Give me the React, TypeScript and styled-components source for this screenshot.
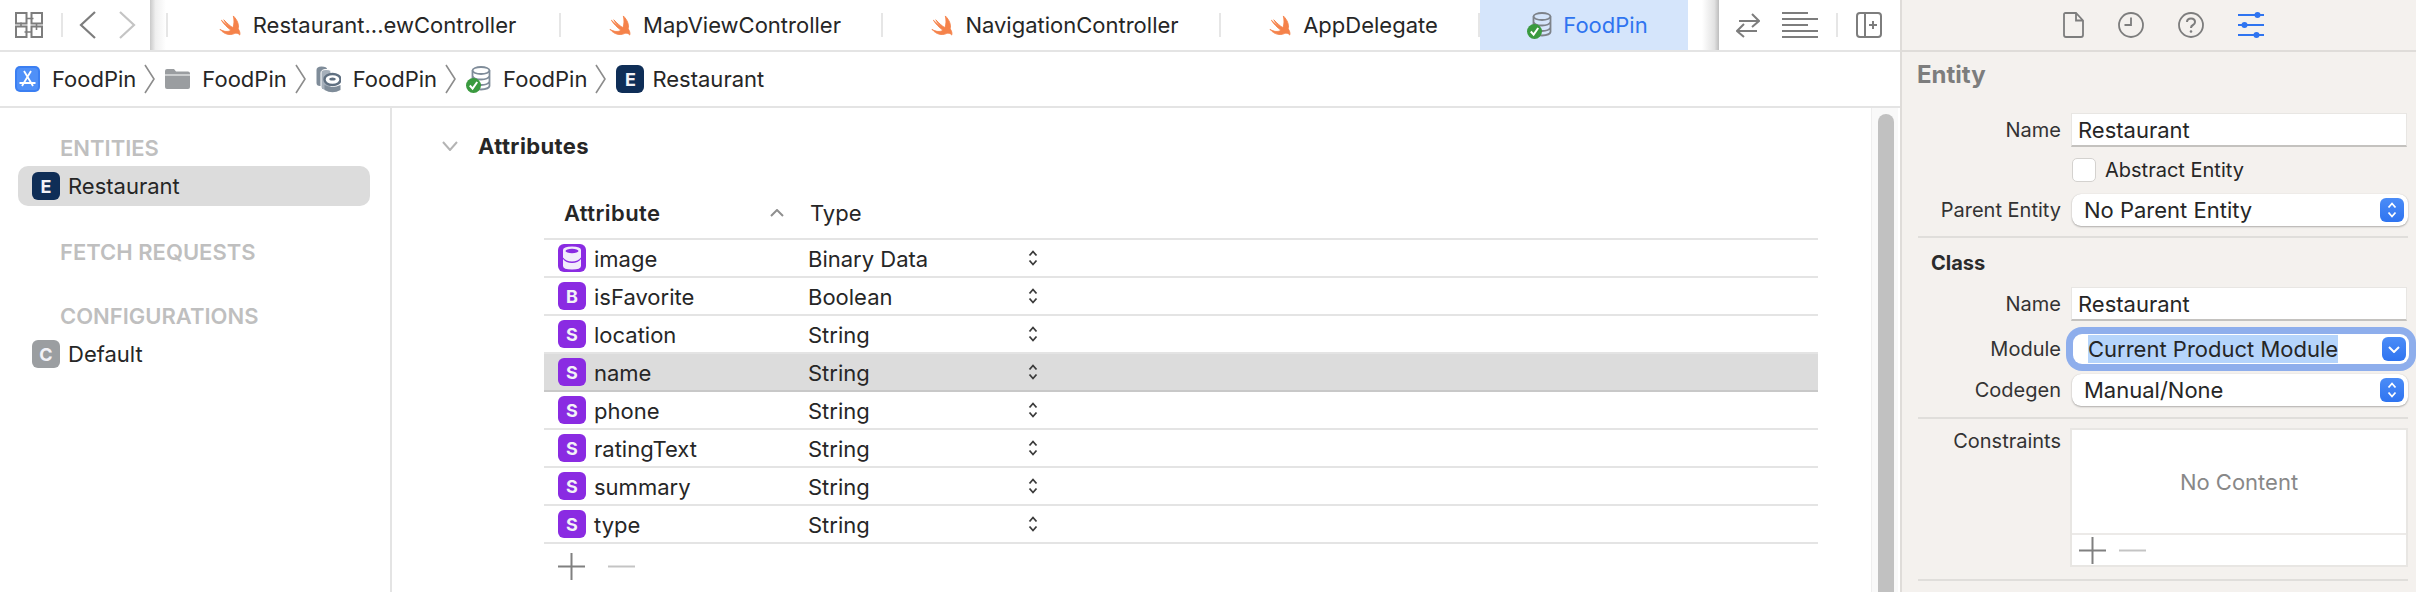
import React from "react";
import styled, { createGlobalStyle } from "styled-components";

const GlobalStyle = createGlobalStyle`
  html, body {
    margin: 0;
    padding: 0;
    background: #fff;
  }
  body {
    font-family: Inter, "Liberation Sans", sans-serif;
    font-size: 22px;
    color: #262626;
    overflow: hidden;
  }
`;

const Page = styled.div`
  display: flex;
  width: 2416px;
  height: 592px;
  overflow: hidden;
`;

const MainColumn = styled.div`
  display: flex;
  flex-direction: column;
  width: 1900px;
  flex-shrink: 0;
`;

const Toolbar = styled.div`
  display: flex;
  height: 52px;
  box-sizing: border-box;
  border-bottom: 2px solid #e4e4e4;
`;

const NavGroup = styled.div`
  display: flex;
  align-items: center;
  gap: 23px;
  width: 150px;
  padding-left: 15px;
  box-sizing: border-box;
  flex-shrink: 0;
`;

const NavRule = styled.div`
  width: 2px;
  height: 24px;
  background: #e6e6e6;
  margin: 0 -7px 0 -5px;
`;

const Shadow = styled.div<{ $w: number }>`
  width: ${(p) => p.$w}px;
  height: 50px;
  flex-shrink: 0;
`;

const LeftShadow = styled(Shadow)`
  background: linear-gradient(90deg, #c9c9c9 0, #efefef 35%, #fff 100%);
`;

const RightShadow = styled(Shadow)`
  background: linear-gradient(90deg, #fff 0, #fff 45%, #e2e2e2 85%, #bdbdbd 100%);
`;

const TabRule = styled.div`
  width: 2px;
  height: 24px;
  background: #e6e6e6;
  align-self: center;
  flex-shrink: 0;
`;

const Tab = styled.div<{ $w: number; $active?: boolean }>`
  display: flex;
  align-items: center;
  justify-content: center;
  gap: 11px;
  width: ${(p) => p.$w}px;
  height: 50px;
  flex-shrink: 0;
  padding-left: 7px;
  box-sizing: border-box;
  background: ${(p) => (p.$active ? "#d5e5fb" : "transparent")};
  color: ${(p) => (p.$active ? "#2f74f0" : "#262626")};
`;

const ToolGroup = styled.div`
  display: flex;
  align-items: center;
  flex: 1;
  padding-left: 17px;
  gap: 22px;
`;

const ToolRule = styled.div`
  width: 2px;
  height: 24px;
  background: #e6e6e6;
  margin: 0 -4px 0 -4px;
`;

const Breadcrumb = styled.div`
  display: flex;
  align-items: center;
  height: 56px;
  box-sizing: border-box;
  padding-left: 15px;
  border-bottom: 2px solid #e4e4e4;
`;

const Crumb = styled.div<{ $gap: number }>`
  display: flex;
  align-items: center;
  gap: ${(p) => p.$gap}px;
`;

const CrumbArrow = styled.svg`
  width: 11px;
  height: 30px;
  margin: 0 10px 0 8px;
  flex-shrink: 0;
`;

const Body = styled.div`
  display: flex;
  flex: 1;
  min-height: 0;
`;

const Sidebar = styled.div`
  width: 392px;
  flex-shrink: 0;
  box-sizing: border-box;
  border-right: 2px solid #e4e4e4;
  padding: 28px 20px 0 18px;
`;

const SectionLabel = styled.div<{ $top: number }>`
  height: 24px;
  line-height: 24px;
  margin-top: ${(p) => p.$top}px;
  padding-left: 42px;
  font-weight: 600;
  color: #bfbfbf;
`;

const SidebarRow = styled.div<{ $selected?: boolean }>`
  display: flex;
  align-items: center;
  gap: 8px;
  height: 40px;
  margin-top: 6px;
  padding-left: 14px;
  border-radius: 10px;
  background: ${(p) => (p.$selected ? "#dcdcdc" : "transparent")};
`;

const Badge = styled.div<{ $bg: string }>`
  display: flex;
  align-items: center;
  justify-content: center;
  width: 28px;
  height: 28px;
  flex-shrink: 0;
  border-radius: 6px;
  background: ${(p) => p.$bg};
  color: #f2f2f7;
  font-size: 18px;
  font-weight: 700;
`;

const Editor = styled.div`
  flex: 1;
  box-sizing: border-box;
  padding: 23px 0 0 50px;
  min-width: 0;
`;

const SectionHeader = styled.div`
  display: flex;
  align-items: center;
  gap: 20px;
  height: 30px;
  font-size: 22px;
  letter-spacing: 0.4px;
  font-weight: 700;
`;

const AttributeTable = styled.div`
  margin: 27px 0 0 102px;
  width: 1274px;
`;

const HeaderRow = styled.div`
  display: flex;
  align-items: center;
  height: 52px;
  box-sizing: border-box;
  padding-left: 20px;
  border-bottom: 2px solid #e4e4e4;
`;

const AttributeHeader = styled.div`
  width: 206px;
  letter-spacing: 0.4px;
  font-weight: 600;
`;

const SortCell = styled.div`
  width: 40px;
  display: flex;
`;

const TableRow = styled.div<{ $selected?: boolean }>`
  display: flex;
  align-items: center;
  height: 38px;
  box-sizing: border-box;
  padding-left: 14px;
  border-bottom: 2px solid ${(p) => (p.$selected ? "#c8c8c8" : "#e4e4e4")};
  background: ${(p) => (p.$selected ? "#dcdcdc" : "transparent")};
`;

const NameCell = styled.div`
  width: 214px;
  margin-left: 8px;
  padding-top: 1px;
`;

const TypeCell = styled.div`
  width: 220px;
  padding-top: 2px;
`;

const AddRow = styled.div`
  display: flex;
  align-items: center;
  gap: 23px;
  height: 27px;
  margin-top: 9px;
  padding-left: 14px;
`;

const ScrollTrack = styled.div`
  width: 27px;
  margin-right: 2px;
  flex-shrink: 0;
  box-sizing: border-box;
  background: #f9f9f9;
  border-left: 1px solid #eeeeee;
  padding: 6px 4px 0 6px;
`;

const ScrollThumb = styled.div`
  height: 100%;
  border-radius: 8px 8px 0 0;
  background: #c1c1c1;
`;

const Inspector = styled.div`
  flex: 1;
  box-sizing: border-box;
  border-left: 2px solid #dfdcd9;
  background: #f4f1ee;
  font-size: 20px;
`;

const InspectorTabs = styled.div`
  display: flex;
  align-items: center;
  height: 52px;
  box-sizing: border-box;
  border-bottom: 2px solid #dfdcd9;
  padding-left: 161px;
  gap: 34px;
`;

const InspectorTitle = styled.div`
  height: 46px;
  line-height: 46px;
  padding-left: 15px;
  font-size: 24px;
  font-weight: 700;
  color: #7d7d7d;
`;

const FormRow = styled.div<{ $top: number }>`
  display: flex;
  align-items: center;
  margin-top: ${(p) => p.$top}px;
`;

const ConstraintRow = styled(FormRow)`
  align-items: flex-start;
`;

const FieldLabel = styled.div`
  width: 159px;
  flex-shrink: 0;
  text-align: right;
  color: #333;
`;

const ConstraintLabel = styled(FieldLabel)`
  margin-top: 1px;
`;

const TextField = styled.div`
  width: 336px;
  height: 34px;
  margin-left: 10px;
  padding-left: 6px;
  box-sizing: border-box;
  display: flex;
  align-items: center;
  background: #fff;
  border: 1px solid #e8e6e3;
  border-bottom: 2px solid #c4c2bf;
  color: #262626;
  font-size: 22px;
`;

const CheckRow = styled.div`
  display: flex;
  align-items: center;
  gap: 9px;
  margin: 11px 0 0 170px;
`;

const CheckBox = styled.div`
  width: 24px;
  height: 24px;
  box-sizing: border-box;
  background: #fff;
  border: 1px solid #d4d2cf;
  border-radius: 5px;
`;

const Select = styled.div<{ $focused?: boolean }>`
  display: flex;
  align-items: center;
  justify-content: space-between;
  width: 336px;
  height: ${(p) => (p.$focused ? 30 : 32)}px;
  margin-left: ${(p) => (p.$focused ? 12 : 11)}px;
  padding: ${(p) => (p.$focused ? "0 3px 0 15px" : "0 4px 0 12px")};
  box-sizing: border-box;
  border-radius: 9px;
  background: #fff;
  font-size: 22px;
  box-shadow: ${(p) =>
    p.$focused
      ? "0 0 0 7px #8eaeec"
      : "0 1px 2px rgba(0,0,0,.28), 0 0 1px rgba(0,0,0,.15)"};
`;

const Highlight = styled.span`
  background: #b5d4fb;
  line-height: 28px;
`;

const SelectButton = styled.div`
  display: flex;
  align-items: center;
  justify-content: center;
  width: 24px;
  height: 24px;
  border-radius: 6px;
  background: linear-gradient(#4b8cf7, #2f74f0);
`;

const GroupTitle = styled.div`
  height: 24px;
  line-height: 24px;
  margin-top: 13px;
  padding-left: 29px;
  font-weight: 700;
  color: #2b2b2b;
`;

const Separator = styled.div<{ $top: number }>`
  height: 2px;
  margin: ${(p) => p.$top}px 8px 0 16px;
  background: #e0dedb;
`;

const ConstraintBox = styled.div`
  width: 338px;
  height: 139px;
  margin-left: 9px;
  box-sizing: border-box;
  border: 2px solid #e8e6e3;
  background: #fff;
  display: flex;
  flex-direction: column;
`;

const EmptyText = styled.div`
  display: flex;
  align-items: center;
  justify-content: center;
  height: 105px;
  flex-shrink: 0;
  box-sizing: border-box;
  padding-top: 1px;
  border-bottom: 2px solid #eceae8;
  color: #888;
  font-size: 22px;
`;

const BoxTools = styled.div`
  display: flex;
  align-items: center;
  gap: 13px;
  flex: 1;
  padding-left: 7px;
`;

/* drawings */

const SwiftIcon = () => (
  <svg width="24" height="21" viewBox="0 0 24 22">
    <path
      d="M15.5 1 C20 5.5 21.6 10.5 20.6 14.5 C22 16.5 22.8 18.6 22.2 21 C20.6 18.8 18.5 18.6 16.5 19.5 C12 21.5 6 20.5 1.5 15 C5.5 17.6 10 18 13 16 C9 13 5.5 9.5 3 5.5 C6 8.4 9 10.8 11.5 12.6 C9 10.2 7 7.8 5.5 5 C9 8.8 12 11.4 15 13.3 C16.5 10 16.5 5 15.5 1 Z"
      fill="#f5824a"
      stroke="#f5824a"
      strokeWidth="0.9"
      strokeLinejoin="round"
    />
  </svg>
);

const GridIcon = () => (
  <svg width="28" height="26" viewBox="0 0 28 26" fill="none" stroke="#7d7d7d" strokeWidth="2">
    <rect x="1" y="1" width="10.5" height="10.5" />
    <rect x="16.5" y="1" width="10.5" height="10.5" />
    <rect x="1" y="14.5" width="10.5" height="10.5" />
    <rect x="16.5" y="14.5" width="10.5" height="10.5" />
    <path d="M11.5 6.5h7M21.5 11v7M16.5 20h-7M6 14.5v-4" strokeWidth="1.6" />
  </svg>
);

const NavChevron = ({ back, color }: { back?: boolean; color: string }) => (
  <svg width="17" height="28" viewBox="0 0 17 28" fill="none" stroke={color} strokeWidth="2.2">
    <path d={back ? "M16 1 L2 14 L16 27" : "M1 1 L15 14 L1 27"} />
  </svg>
);

const SwapIcon = () => (
  <svg width="24" height="26" viewBox="0 0 24 26" fill="none" stroke="#7d7d7d" strokeWidth="2">
    <path d="M3 9 H23 M16 2 L23 9 L16 15" />
    <path d="M1 19 H21 M8 12 L1 19 L8 25" />
  </svg>
);

const LinesIcon = () => (
  <svg width="36" height="26" viewBox="0 0 36 26" fill="none" stroke="#7d7d7d" strokeWidth="2">
    <path d="M0 1 H26 M0 7 H36 M0 13 H26 M0 19 H36 M0 25 H36" />
  </svg>
);

const AddEditorIcon = () => (
  <svg width="26" height="26" viewBox="0 0 26 26" fill="none" stroke="#7d7d7d" strokeWidth="2">
    <rect x="1" y="1" width="24" height="24" rx="3" />
    <path d="M9 1 V25 M13 13 H21 M17 9 V17" />
  </svg>
);

const AppIcon = () => (
  <svg width="25" height="26" viewBox="0 0 25 26">
    <rect x="0" y="0" width="25" height="26" rx="5" fill="#3b7ff2" />
    <rect x="2" y="2" width="21" height="22" rx="3.5" fill="#4f90f8" />
    <path d="M9 5 L18 20 M16 5 L7 20 M4.5 17 H20.5" stroke="#fff" strokeWidth="1.8" fill="none" />
  </svg>
);

const FolderIcon = () => (
  <svg width="25" height="20" viewBox="0 0 25 20">
    <path d="M0 2 Q0 0 2 0 H9 L11 2.5 H23 Q25 2.5 25 4.5 V5.5 H0 Z" fill="#9a9da0" />
    <path d="M0 6.5 H25 V18 Q25 20 23 20 H2 Q0 20 0 18 Z" fill="#9a9da0" />
  </svg>
);

const ModelStackIcon = () => (
  <svg width="25" height="27" viewBox="0 0 25 27" fill="none">
    <path d="M0.5 4 Q0.5 0.5 5.5 0.5 Q11 0.5 11 3 V20 H4 Q0.5 20 0.5 17 Z" fill="#7f8c99" />
    <path d="M5 7 Q5 3.5 10 3.5 Q15 3.5 15 6 V24 H8 Q5 24 5 21 Z" fill="#a5afba" stroke="#fff" />
    <ellipse cx="16.5" cy="13.5" rx="8" ry="5.5" fill="#fff" stroke="#5f6f80" strokeWidth="2.4" />
    <ellipse cx="16.5" cy="13" rx="3.2" ry="1.6" fill="#5f6f80" />
    <path d="M8.5 19 Q16.5 23 24.5 19 V24 Q16.5 28.5 8.5 24 Z" fill="#7f8c99" />
  </svg>
);

const CheckedDbIcon = ({ stroke }: { stroke: string }) => (
  <svg width="25" height="27" viewBox="0 0 25 27" fill="none">
    <ellipse cx="15" cy="4.5" rx="8.5" ry="3.5" stroke={stroke} strokeWidth="1.8" />
    <path
      d="M6.5 4.5 V20 Q7 23 15 23.5 Q23 23 23.5 20 V4.5 M6.5 10 Q8 13.5 15 13.5 Q22 13.5 23.5 10 M6.5 15.5 Q8 19 15 19 Q22 19 23.5 15.5"
      stroke={stroke}
      strokeWidth="1.8"
    />
    <circle cx="7.5" cy="19.5" r="7.5" fill="#3a9a3f" />
    <path d="M3.8 19.5 L6.6 22.6 L11.2 16" stroke="#fff" strokeWidth="2" />
  </svg>
);

const Chevron = ({ w, h, color, up }: { w: number; h: number; color: string; up?: boolean }) => (
  <svg width={w} height={h} viewBox={`0 0 ${w} ${h}`} fill="none" stroke={color} strokeWidth="2">
    <path d={up ? `M1 ${h - 1} L${w / 2} 1 L${w - 1} ${h - 1}` : `M1 1 L${w / 2} ${h - 1} L${w - 1} 1`} />
  </svg>
);

const ArrowGlyph = () => (
  <CrumbArrow viewBox="0 0 11 30" fill="none" stroke="#8c8c8c" strokeWidth="1.6">
    <path d="M1 1 L10 15 L1 29" />
  </CrumbArrow>
);

const Stepper = ({ color = "#3a3a3a" }: { color?: string }) => (
  <svg width="10" height="16" viewBox="0 0 10 16" fill="none" stroke={color} strokeWidth="1.8">
    <path d="M1.5 5.5 L5 1.5 L8.5 5.5 M1.5 10.5 L5 14.5 L8.5 10.5" />
  </svg>
);

const DbGlyph = () => (
  <svg width="20" height="24" viewBox="0 0 20 24">
    <path d="M1 4 Q1 0.5 10 0.5 Q19 0.5 19 4 V20 Q19 23.5 10 23.5 Q1 23.5 1 20 Z" fill="#f2ecfb" />
    <ellipse cx="10" cy="5" rx="6.5" ry="2.2" fill="#8a2be2" />
    <path d="M1 11.5 Q4 15.5 10 15.5 Q16 15.5 19 11.5 V13 Q16 17 10 17 Q4 17 1 13 Z" fill="#8a2be2" />
  </svg>
);

const PlusIcon = () => (
  <svg width="27" height="27" viewBox="0 0 27 27" stroke="#808080" strokeWidth="2">
    <path d="M0 13.5 H27 M13.5 0 V27" />
  </svg>
);

const MinusIcon = () => (
  <svg width="27" height="27" viewBox="0 0 27 27" stroke="#c4c4c4" strokeWidth="2">
    <path d="M0 13.5 H27" />
  </svg>
);

const FileIcon = () => (
  <svg width="21" height="26" viewBox="0 0 21 26" fill="none" stroke="#7d7d7d" strokeWidth="1.8">
    <path d="M2.5 1 H13 L20 8.5 V23 Q20 25 18 25 H3 Q1 25 1 23 V2.5 Q1 1 2.5 1 Z M13 1 V8.5 H20" />
  </svg>
);

const ClockIcon = () => (
  <svg width="26" height="26" viewBox="0 0 26 26" fill="none" stroke="#7d7d7d" strokeWidth="1.8">
    <circle cx="13" cy="13" r="12" />
    <path d="M13 5.5 V13 H6.5" />
  </svg>
);

const HelpIcon = () => (
  <svg width="26" height="26" viewBox="0 0 26 26" fill="none" stroke="#7d7d7d" strokeWidth="1.8">
    <circle cx="13" cy="13" r="12" />
    <path d="M9 10 Q9 6.5 13 6.5 Q17 6.5 17 10 Q17 12 15 13 Q13 14 13 16" strokeWidth="2" />
    <circle cx="13" cy="19.5" r="1.3" fill="#7d7d7d" stroke="none" />
  </svg>
);

const SlidersIcon = () => (
  <svg width="26" height="26" viewBox="0 0 26 26" stroke="#2f74f0" strokeWidth="2.2" fill="#2f74f0">
    <path d="M0 3 H26 M0 13 H26 M0 23 H26" />
    <circle cx="19.5" cy="3" r="3" stroke="none" />
    <circle cx="6.5" cy="13" r="3" stroke="none" />
    <circle cx="18.5" cy="23" r="3" stroke="none" />
  </svg>
);

const tabs = [
  { title: "Restaurant...ewController", width: 391 },
  { title: "MapViewController", width: 320 },
  { title: "NavigationController", width: 336 },
  { title: "AppDelegate", width: 257 },
];

const crumbs: { icon: React.ReactNode; label: string }[] = [
  { icon: <AppIcon />, label: "FoodPin" },
  { icon: <FolderIcon />, label: "FoodPin" },
  { icon: <ModelStackIcon />, label: "FoodPin" },
  { icon: <CheckedDbIcon stroke="#7f8c99" />, label: "FoodPin" },
];

const attributes = [
  { name: "image", type: "Binary Data", badge: "db" },
  { name: "isFavorite", type: "Boolean", badge: "B" },
  { name: "location", type: "String", badge: "S" },
  { name: "name", type: "String", badge: "S", selected: true },
  { name: "phone", type: "String", badge: "S" },
  { name: "ratingText", type: "String", badge: "S" },
  { name: "summary", type: "String", badge: "S" },
  { name: "type", type: "String", badge: "S" },
];

export default function App() {
  return (
    <Page>
      <GlobalStyle />
      <MainColumn>
        <Toolbar>
          <NavGroup>
            <GridIcon />
            <NavRule />
            <NavChevron back color="#7d7d7d" />
            <NavChevron color="#c4c4c4" />
          </NavGroup>
          <LeftShadow $w={16} />
          <TabRule />
          {tabs.map((t) => (
            <React.Fragment key={t.title}>
              <Tab $w={t.width}>
                <SwiftIcon />
                {t.title}
              </Tab>
              <TabRule />
            </React.Fragment>
          ))}
          <Tab $w={208} $active>
            <CheckedDbIcon stroke="#7d8289" />
            FoodPin
          </Tab>
          <RightShadow $w={31} />
          <ToolGroup>
            <SwapIcon />
            <LinesIcon />
            <ToolRule />
            <AddEditorIcon />
          </ToolGroup>
        </Toolbar>
        <Breadcrumb>
          {crumbs.map((c, i) => (
            <React.Fragment key={i}>
              <Crumb $gap={12}>
                {c.icon}
                {c.label}
              </Crumb>
              <ArrowGlyph />
            </React.Fragment>
          ))}
          <Crumb $gap={8}>
            <Badge $bg="#0f2e57">E</Badge>
            Restaurant
          </Crumb>
        </Breadcrumb>
        <Body>
          <Sidebar>
            <SectionLabel $top={0}>ENTITIES</SectionLabel>
            <SidebarRow $selected>
              <Badge $bg="#0f2e57">E</Badge>
              Restaurant
            </SidebarRow>
            <SectionLabel $top={34}>FETCH REQUESTS</SectionLabel>
            <SectionLabel $top={40}>CONFIGURATIONS</SectionLabel>
            <SidebarRow>
              <Badge $bg="#9b9ea1">C</Badge>
              Default
            </SidebarRow>
          </Sidebar>
          <Editor>
            <SectionHeader>
              <Chevron w={16} h={10} color="#b4b4b4" />
              Attributes
            </SectionHeader>
            <AttributeTable>
              <HeaderRow>
                <AttributeHeader>Attribute</AttributeHeader>
                <SortCell>
                  <Chevron w={14} h={8} color="#8f8f8f" up />
                </SortCell>
                Type
              </HeaderRow>
              {attributes.map((a) => (
                <TableRow key={a.name} $selected={a.selected}>
                  <Badge $bg="#8a2be2">{a.badge === "db" ? <DbGlyph /> : a.badge}</Badge>
                  <NameCell>{a.name}</NameCell>
                  <TypeCell>{a.type}</TypeCell>
                  <Stepper />
                </TableRow>
              ))}
              <AddRow>
                <PlusIcon />
                <MinusIcon />
              </AddRow>
            </AttributeTable>
          </Editor>
          <ScrollTrack>
            <ScrollThumb />
          </ScrollTrack>
        </Body>
      </MainColumn>
      <Inspector>
        <InspectorTabs>
          <FileIcon />
          <ClockIcon />
          <HelpIcon />
          <SlidersIcon />
        </InspectorTabs>
        <InspectorTitle>Entity</InspectorTitle>
        <FormRow $top={15}>
          <FieldLabel>Name</FieldLabel>
          <TextField>Restaurant</TextField>
        </FormRow>
        <CheckRow>
          <CheckBox />
          Abstract Entity
        </CheckRow>
        <FormRow $top={12}>
          <FieldLabel>Parent Entity</FieldLabel>
          <Select>
            No Parent Entity
            <SelectButton>
              <Stepper color="#fff" />
            </SelectButton>
          </Select>
        </FormRow>
        <Separator $top={10} />
        <GroupTitle>Class</GroupTitle>
        <FormRow $top={12}>
          <FieldLabel>Name</FieldLabel>
          <TextField>Restaurant</TextField>
        </FormRow>
        <FormRow $top={13}>
          <FieldLabel>Module</FieldLabel>
          <Select $focused>
            <Highlight>Current Product Module</Highlight>
            <SelectButton>
              <Chevron w={12} h={7} color="#fff" />
            </SelectButton>
          </Select>
        </FormRow>
        <FormRow $top={10}>
          <FieldLabel>Codegen</FieldLabel>
          <Select>
            Manual/None
            <SelectButton>
              <Stepper color="#fff" />
            </SelectButton>
          </Select>
        </FormRow>
        <Separator $top={11} />
        <ConstraintRow $top={9}>
          <ConstraintLabel>Constraints</ConstraintLabel>
          <ConstraintBox>
            <EmptyText>No Content</EmptyText>
            <BoxTools>
              <PlusIcon />
              <MinusIcon />
            </BoxTools>
          </ConstraintBox>
        </ConstraintRow>
        <Separator $top={12} />
      </Inspector>
    </Page>
  );
}
